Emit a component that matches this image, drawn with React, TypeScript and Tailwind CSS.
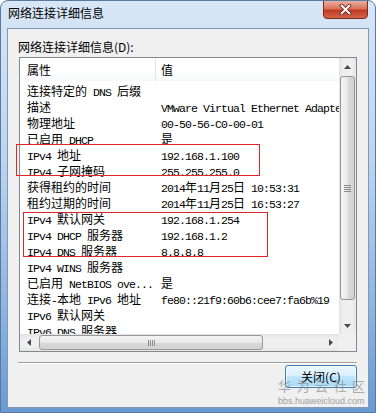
import React from 'react'

const CJK_SPLIT = /([\u2e80-\u9fff\uff00-\uffef]+)/
const CJK_TEST = /[\u2e80-\u9fff\uff00-\uffef]/

// SimSun-like mix: CJK full width 12px, latin half width 6px
function Mixed({ text }: { text: string }) {
  const parts = text.split(CJK_SPLIT).filter(Boolean)
  return (
    <>
      {parts.map((p, i) =>
        CJK_TEST.test(p) ? (
          <span key={i} className="font-['Noto_Sans_CJK_SC',sans-serif] text-[12px] tracking-normal">
            {p}
          </span>
        ) : (
          <span key={i} className="font-['Liberation_Mono',monospace] text-[11.5px] tracking-[-0.9px]">
            {p}
          </span>
        )
      )}
    </>
  )
}

const rows: [string, string][] = [
  ['连接特定的 DNS 后缀', ''],
  ['描述', 'VMware Virtual Ethernet Adapter for VMnet8'],
  ['物理地址', '00-50-56-C0-00-01'],
  ['已启用 DHCP', '是'],
  ['IPv4 地址', '192.168.1.100'],
  ['IPv4 子网掩码', '255.255.255.0'],
  ['获得租约的时间', '2014年11月25日 10:53:31'],
  ['租约过期的时间', '2014年11月25日 16:53:27'],
  ['IPv4 默认网关', '192.168.1.254'],
  ['IPv4 DHCP 服务器', '192.168.1.2'],
  ['IPv4 DNS 服务器', '8.8.8.8'],
  ['IPv4 WINS 服务器', ''],
  ['已启用 NetBIOS ove...', '是'],
  ['连接-本地 IPv6 地址', 'fe80::21f9:60b6:cee7:fa6b%19'],
  ['IPv6 默认网关', ''],
  ['IPv6 DNS 服务器', ''],
]

function Arrow({ dir }: { dir: 'up' | 'down' | 'left' | 'right' }) {
  const d = {
    up: 'M3.5 0 L7 4 L0 4 Z',
    down: 'M0 0 L7 0 L3.5 4 Z',
    left: 'M4 0 L4 7 L0 3.5 Z',
    right: 'M0 0 L4 3.5 L0 7 Z',
  }[dir]
  const vertical = dir === 'up' || dir === 'down'
  return (
    <svg width={vertical ? 7 : 4} height={vertical ? 4 : 7} viewBox={vertical ? '0 0 7 4' : '0 0 4 7'}>
      <path d={d} fill="#4a4a4a" />
    </svg>
  )
}

function VScroll() {
  return (
    <div className="w-[17px] h-full flex flex-col bg-[linear-gradient(to_right,#e2e2e2,#efefef_25%,#efefef_75%,#e6e6e6)]">
      <div className="h-[17px] flex items-center justify-center">
        <Arrow dir="up" />
      </div>
      <div className="flex-1 px-[1px] pt-[1px]">
        <div className="h-[224px] rounded-[3px] border border-[#979797] bg-[linear-gradient(to_right,#f4f4f4,#e8e8e8_50%,#d9d9d9_51%,#d2d2d2)] flex flex-col items-center justify-center gap-[1px]">
          <div className="w-[7px] h-[1px] bg-[#8c8c8c]" />
          <div className="w-[7px] h-[1px] bg-[#8c8c8c]" />
          <div className="w-[7px] h-[1px] bg-[#8c8c8c]" />
          <div className="w-[7px] h-[1px] bg-[#8c8c8c]" />
        </div>
      </div>
      <div className="h-[17px] flex items-center justify-center">
        <Arrow dir="down" />
      </div>
    </div>
  )
}

function HScroll() {
  return (
    <div className="w-[319px] h-full flex bg-[linear-gradient(to_bottom,#e2e2e2,#efefef_25%,#efefef_75%,#e6e6e6)]">
      <div className="w-[17px] flex items-center justify-center">
        <Arrow dir="left" />
      </div>
      <div className="flex-1 py-[1px] pl-[2px]">
        <div className="w-[224px] h-full rounded-[3px] border border-[#979797] bg-[linear-gradient(to_bottom,#f4f4f4,#e8e8e8_50%,#d9d9d9_51%,#d2d2d2)] flex items-center justify-center gap-[1px]">
          <div className="w-[1px] h-[6px] bg-[#8c8c8c]" />
          <div className="w-[1px] h-[6px] bg-[#8c8c8c]" />
          <div className="w-[1px] h-[6px] bg-[#8c8c8c]" />
          <div className="w-[1px] h-[6px] bg-[#8c8c8c]" />
        </div>
      </div>
      <div className="w-[17px] flex items-center justify-center">
        <Arrow dir="right" />
      </div>
    </div>
  )
}

export default function App() {
  return (
    <div className="relative w-[376px] h-[413px] overflow-hidden rounded-t-[8px] border border-[#5a7ba1] bg-[linear-gradient(to_bottom,#d8e6f6,#bcd3ee_40%,#8fb3e0_75%,#6b99d4)] font-['Noto_Sans_CJK_SC',sans-serif] text-black">
      {/* title bar */}
      <div className="h-[27px] pb-[3px] pl-[7px] flex items-center text-[12px]">网络连接详细信息</div>

      {/* close button */}
      <div className="absolute top-[-1px] right-[7px] w-[45px] h-[19px] rounded-b-[4px] border border-[#7c2a1d] bg-[linear-gradient(to_bottom,#eab0a2,#d9725d_45%,#c23a22_55%,#d3664a)] flex items-center justify-center">
        <svg width="13" height="11" viewBox="0 0 13 11">
          <path d="M2.5 1.5 L10.5 9.5 M10.5 1.5 L2.5 9.5" stroke="#5e1a10" strokeWidth="3.6" strokeLinecap="round" />
          <path d="M2.5 1.5 L10.5 9.5 M10.5 1.5 L2.5 9.5" stroke="#ffffff" strokeWidth="2" strokeLinecap="round" />
        </svg>
      </div>

      {/* client area */}
      <div className="ml-[6px] w-[362px] h-[380px] border border-[#7d99b8] bg-[#f0f0f0] flex flex-col pl-[10px] pr-[11px]">
        <div className="mt-[10px] h-[16px] leading-[16px] text-[12px]">网络连接详细信息(D):</div>

        {/* list view */}
        <div className="mt-[2px] ml-[1px] h-[295px] border border-[#828790] bg-white flex flex-col">
          <div className="h-[276px] flex">
            <div className="w-[319px] h-full overflow-hidden">
              <div className="h-[23px] flex items-center text-[12px] bg-[linear-gradient(to_bottom,#ffffff,#ffffff_60%,#f7f8f9)]">
                <div className="w-[136px] h-full pl-[7px] flex items-center border-r border-[#e3e5e8]">属性</div>
                <div className="pl-[5px]">值</div>
              </div>
              {rows.map(([k, v]) => (
                <div key={k} className="h-[16px] leading-[16px] flex whitespace-pre">
                  <div className="w-[135px] shrink-0 pl-[7px]">
                    <Mixed text={k} />
                  </div>
                  <div className="pl-[6px]">
                    <Mixed text={v} />
                  </div>
                </div>
              ))}
            </div>
            <VScroll />
          </div>
          <div className="h-[17px] flex">
            <HScroll />
            <div className="w-[17px] bg-[#f0f0f0]" />
          </div>
        </div>

        {/* separator */}
        <div className="mt-[10px] h-[2px] border-t border-[#a0a0a0] border-b border-b-white" />

        <div className="mt-[1px] flex justify-end">
          <div className="w-[72px] h-[23px] rounded-[3px] border border-[#3c7fb1] bg-[linear-gradient(to_bottom,#ecf7fd,#d9f0fc_45%,#bee6fd_50%,#a7d9f5)] shadow-[inset_0_0_0_1px_rgba(255,255,255,0.7)] flex items-center justify-center text-[12px]">
            关闭(C)
          </div>
        </div>
      </div>

      {/* red annotation boxes */}
      <div className="absolute left-[15px] top-[143px] w-[244px] h-[32px] border border-[#e0262d]" />
      <div className="absolute left-[22px] top-[211px] w-[245px] h-[45px] border border-[#e0262d]" />

      {/* watermark */}
      <div className="absolute left-[277px] top-[377px] text-[13px] leading-[16px] tracking-[5.5px] text-[#8e8e8e] opacity-70">
        华为云社区
      </div>
      <div className="absolute left-[277px] top-[395px] font-['Liberation_Sans',sans-serif] text-[9px] leading-[11px] text-[#8a8a8a] opacity-80">
        bbs.huaweicloud.com
      </div>
    </div>
  )
}
